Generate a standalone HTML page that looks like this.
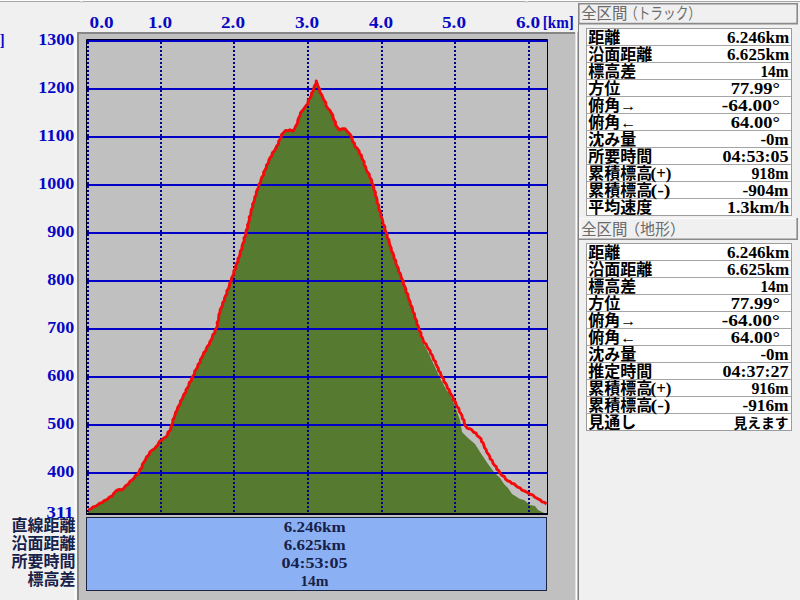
<!DOCTYPE html>
<html lang="ja">
<head>
<meta charset="utf-8">
<title>断面図 - 全区間</title>
<style>
html,body{margin:0;padding:0;}
body{width:800px;height:600px;overflow:hidden;background:#f0f0f0;position:relative;
font-family:"Liberation Serif",serif;font-size:16px;}
#stage{position:absolute;left:0;top:0;width:800px;height:600px;display:block;}
.h{position:absolute;display:block;height:16px;line-height:16px;overflow:hidden;white-space:nowrap;
color:transparent;font-weight:bold;font-size:12px;pointer-events:none;}
</style>
</head>
<body>
<svg id="stage" width="800" height="600" viewBox="0 0 800 600">
<rect width="800" height="600" fill="#f0f0f0"/>
<rect x="0" y="0" width="800" height="1" fill="#fcfcfc"/>
<path fill="none" stroke="#a6a6a6" d="M0 1.5H80.5L81.5 2.5L82.5 1.5H525.5L526.5 2.5L527.5 1.5H800"/>
<rect x="74" y="32" width="3" height="568" fill="#f8f8f8"/>
<rect x="77" y="32" width="500" height="568" fill="#c0c0c0"/>
<rect x="77" y="32" width="498" height="2" fill="#868686"/>
<rect x="77" y="32" width="2" height="568" fill="#868686"/>
<rect x="575" y="32" width="1" height="568" fill="#e2e2e2"/>
<rect x="576" y="32" width="1" height="568" fill="#fdfdfd"/>
<rect x="577" y="32" width="1" height="568" fill="#b8b8b8"/>
<polygon fill="#557a30" points="88,510 96,506 104,501 112,496 117,490 122,490 128,484 134,478 139,472 144,462 150,452 156,447 160,441 166,437 171,428 173,420 177,410 182,399 193,376 203,355 210,342 216.5,328 219.8,312 225.5,296 231,281 240,254 246,233 251,212 255,197 259,185 265,170 270,158 277,146 281,137 283,133 286,130.5 290,130 293,131 296,126 298,120 300,115 302,111 306,106 310,98 313,91 316.5,81 320,92 324,100 327.5,108 331.5,113 334,120 337,127 339.5,130 345,128.5 347.5,132 350,134 352,139 355,146 359,151 363,160 366,169 369,174 373,185 377,200 381,216 386,232 391,248 397,266 402,279 410,302 418,326 422,341 428,352 434,365 440,378 447,391 449,392 455,406 460,420 462,432 468,438 475,444 480,452 488,464 494,472 500,478 504,484 508,488 512,494 520,499 524,500 530,505 535,506 538,510 542,512 544,513 544,514 88,514"/>
<g fill="#0000c6">
<rect x="87" y="472" width="460" height="2"/>
<rect x="87" y="424" width="460" height="2"/>
<rect x="87" y="376" width="460" height="2"/>
<rect x="87" y="328" width="460" height="2"/>
<rect x="87" y="280" width="460" height="2"/>
<rect x="87" y="232" width="460" height="2"/>
<rect x="87" y="184" width="460" height="2"/>
<rect x="87" y="136" width="460" height="2"/>
<rect x="87" y="88" width="460" height="2"/>
<rect x="87" y="40" width="460" height="2"/>
</g>
<g stroke="#000084" stroke-width="2" stroke-dasharray="2 2" shape-rendering="crispEdges">
<line x1="88" y1="42" x2="88" y2="513"/>
<line x1="161" y1="42" x2="161" y2="513"/>
<line x1="234" y1="42" x2="234" y2="513"/>
<line x1="308" y1="42" x2="308" y2="513"/>
<line x1="382" y1="42" x2="382" y2="513"/>
<line x1="455" y1="42" x2="455" y2="513"/>
<line x1="529" y1="42" x2="529" y2="513"/>
</g>
<polyline fill="none" stroke="#f40a0a" stroke-width="2.9" stroke-linejoin="round" points="88.0,510.0 90.8,509.0 93.1,506.8 96.1,506.2 98.0,504.7 99.8,503.2 102.3,502.7 103.9,500.8 106.1,499.9 108.1,498.7 109.7,496.8 112.1,496.2 113.5,493.8 115.2,491.9 117.1,490.1 119.5,489.5 122.0,490.1 124.0,488.0 125.7,485.7 128.2,484.2 129.7,481.7 132.0,480.0 134.1,478.1 135.3,475.7 137.7,474.3 139.0,472.0 140.0,469.4 142.0,467.2 142.3,464.3 144.1,462.0 145.6,459.6 146.6,456.8 149.0,454.8 149.9,451.9 152.0,450.3 154.3,449.0 155.9,446.8 157.7,445.2 158.6,443.0 159.9,440.9 162.3,440.1 163.7,438.0 166.0,437.0 167.5,434.9 168.0,432.2 170.2,430.5 170.9,428.0 171.5,425.3 172.8,422.8 172.8,419.9 174.3,417.6 175.1,415.0 175.6,412.3 177.2,410.1 177.7,407.6 179.0,405.6 180.3,403.6 180.5,401.0 182.2,399.1 183.0,396.7 183.9,394.3 185.8,392.3 186.0,389.6 187.7,387.6 188.8,385.3 189.2,382.7 191.3,380.8 191.7,378.2 193.0,376.0 194.5,373.9 194.7,371.1 196.6,369.1 197.5,366.7 198.2,364.2 200.2,362.2 200.4,359.5 201.9,357.4 203.1,355.1 203.7,352.6 205.7,350.9 206.4,348.4 207.5,346.2 209.3,344.4 209.8,341.9 211.3,339.8 212.3,337.4 212.8,334.8 214.8,332.9 215.1,330.2 216.5,328.0 217.5,325.4 217.1,322.6 218.5,320.1 218.7,317.3 218.9,314.6 220.0,312.0 220.2,309.6 221.5,307.5 222.5,305.2 222.6,302.7 224.3,300.7 224.5,298.2 225.4,296.0 226.9,293.7 226.8,290.8 228.5,288.6 229.3,286.0 229.7,283.3 231.2,281.1 231.5,278.4 232.6,276.1 233.8,273.8 233.8,271.0 235.5,268.9 235.8,266.2 236.4,263.7 238.1,261.5 237.9,258.8 239.4,256.5 240.1,254.0 240.3,251.2 242.0,248.9 242.0,246.1 242.9,243.5 244.2,241.0 244.0,238.1 245.6,235.7 246.0,233.0 246.2,230.3 247.8,227.9 247.5,225.0 248.6,222.5 249.4,220.0 249.2,217.1 250.8,214.7 250.9,212.0 251.4,209.4 252.8,207.1 252.5,204.4 253.9,202.1 254.5,199.5 254.8,197.0 256.3,194.8 256.3,192.1 257.3,189.8 258.6,187.5 258.8,184.9 260.4,182.6 261.0,180.0 261.7,177.4 263.5,175.2 263.6,172.3 265.0,170.0 266.3,167.7 266.5,165.0 268.5,163.0 268.8,160.3 269.9,158.0 271.8,155.8 272.3,152.9 274.5,150.9 275.7,148.4 276.8,145.9 278.5,144.0 278.7,141.3 280.0,139.2 281.1,137.1 281.5,134.8 283.2,133.1 284.4,131.7 285.9,130.4 288.1,130.8 290.0,129.8 293.0,131.1 294.7,128.6 295.8,125.9 297.5,123.2 297.9,120.0 298.9,117.5 300.2,115.1 300.5,112.8 302.1,111.1 304.0,108.5 305.9,105.9 307.8,103.6 308.3,100.5 310.0,98.0 311.3,95.8 311.5,93.1 313.2,91.1 313.7,88.4 314.5,85.9 316.1,83.7 316.3,80.9 317.1,83.8 318.1,86.5 319.6,89.1 319.8,92.1 321.6,94.5 322.7,97.3 323.9,100.1 325.7,102.4 326.0,105.5 327.5,108.0 329.8,110.3 331.3,113.1 332.8,115.2 333.1,117.7 333.9,120.0 335.5,122.1 335.5,124.9 337.1,127.0 338.4,128.4 339.3,130.1 342.1,128.7 345.0,128.6 346.2,130.3 347.6,131.9 349.9,134.2 351.3,136.4 352.0,139.0 352.7,141.5 354.5,143.5 354.8,146.1 357.1,148.4 359.1,150.9 359.5,153.5 361.4,155.3 361.8,157.8 362.9,160.0 364.2,162.1 364.0,164.7 365.5,166.7 366.0,169.0 367.1,171.7 369.2,173.9 369.5,176.3 370.6,178.4 371.8,180.5 371.7,183.0 373.2,184.9 373.6,187.5 374.0,190.1 375.5,192.4 375.2,195.1 376.5,197.5 377.1,200.0 377.2,202.8 378.8,205.2 378.8,208.1 379.5,210.7 380.8,213.2 380.8,216.1 382.1,218.6 382.7,221.3 383.1,224.1 384.9,226.5 384.8,229.4 386.0,232.0 387.2,234.6 387.1,237.5 388.9,239.9 389.2,242.7 389.9,245.4 391.2,247.9 391.4,250.7 392.9,253.1 393.8,255.7 394.0,258.4 395.8,260.7 395.9,263.5 397.0,266.0 398.4,268.4 398.5,271.4 400.3,273.7 401.0,276.4 401.9,279.1 403.4,281.4 403.4,284.3 404.8,286.6 405.8,289.1 405.9,292.0 407.8,294.2 408.1,296.9 408.9,299.5 410.2,301.9 410.3,304.6 411.9,306.7 412.5,309.2 412.8,311.7 414.5,313.8 414.5,316.5 415.6,318.8 416.8,321.1 416.7,323.8 418.2,325.9 418.8,328.4 419.4,330.8 421.0,332.8 420.9,335.5 422.3,337.6 423.1,340.0 424.0,342.5 426.2,344.1 427.0,346.7 428.5,348.9 430.2,350.9 430.5,353.4 432.3,355.2 433.1,357.5 433.6,359.8 435.5,361.6 435.9,364.1 437.0,366.2 438.3,368.2 438.5,370.7 440.4,372.5 440.9,374.9 441.9,377.0 443.6,378.9 443.9,381.6 445.7,383.4 446.8,385.6 447.4,388.1 449.2,389.9 449.9,392.5 451.2,394.7 452.9,396.8 453.2,399.6 455.2,401.5 456.0,404.0 456.9,406.6 458.9,408.6 459.2,411.4 460.9,413.6 462.1,415.9 462.3,418.4 464.1,420.2 464.2,422.7 465.0,424.9 466.2,426.9 467.8,428.5 470.1,428.8 472.0,430.0 473.5,432.1 476.0,433.2 477.2,435.6 479.2,437.2 481.1,438.9 481.5,441.4 483.4,443.2 483.9,445.6 484.7,447.9 486.2,449.9 486.8,452.4 488.5,454.3 489.7,456.4 490.2,458.9 492.3,460.6 492.9,463.0 494.3,465.1 496.2,466.7 496.8,469.3 498.9,470.8 500.0,473.0 501.7,475.3 504.4,476.6 505.7,479.3 508.0,481.0 510.2,481.7 511.8,483.5 514.1,483.8 515.9,485.6 517.8,487.2 520.3,488.1 521.9,490.2 524.8,491.1 527.4,492.5 529.9,494.2 532.8,495.0 534.9,497.2 537.4,498.6 540.1,499.8 541.9,501.8 544.5,502.4 546.5,504.0"/>
<path fill="none" stroke="#00001c" d="M86.5 39.5H547.5V514H86.5Z"/>
<rect x="86" y="513" width="462" height="2" fill="#00001c"/>
<rect x="86.5" y="517.5" width="460" height="73" fill="#8cb0f4" stroke="#1c2440"/>
<path fill="none" stroke="#8a8a8a" stroke-width="1.6" d="M578.8 24V3.8H797.2V23.6H578"/>
<rect x="578" y="24" width="1" height="576" fill="#808080"/>
<path fill="none" stroke="#8a8a8a" stroke-width="1.6" d="M797.2 218V239.2H579"/>
<path fill="none" stroke="#fbfbfb" stroke-width="1" d="M580 238V218.5H796"/>
<rect x="586.5" y="28.5" width="205" height="187" fill="#fff" stroke="#9c9c9c"/>
<rect x="587" y="45" width="204" height="1" fill="#a4a4a4"/>
<rect x="587" y="62" width="204" height="1" fill="#a4a4a4"/>
<rect x="587" y="79" width="204" height="1" fill="#a4a4a4"/>
<rect x="587" y="96" width="204" height="1" fill="#a4a4a4"/>
<rect x="587" y="113" width="204" height="1" fill="#a4a4a4"/>
<rect x="587" y="130" width="204" height="1" fill="#a4a4a4"/>
<rect x="587" y="147" width="204" height="1" fill="#a4a4a4"/>
<rect x="587" y="164" width="204" height="1" fill="#a4a4a4"/>
<rect x="587" y="181" width="204" height="1" fill="#a4a4a4"/>
<rect x="587" y="198" width="204" height="1" fill="#a4a4a4"/>
<rect x="586.5" y="243.5" width="205" height="187" fill="#fff" stroke="#9c9c9c"/>
<rect x="587" y="260" width="204" height="1" fill="#a4a4a4"/>
<rect x="587" y="277" width="204" height="1" fill="#a4a4a4"/>
<rect x="587" y="294" width="204" height="1" fill="#a4a4a4"/>
<rect x="587" y="311" width="204" height="1" fill="#a4a4a4"/>
<rect x="587" y="328" width="204" height="1" fill="#a4a4a4"/>
<rect x="587" y="345" width="204" height="1" fill="#a4a4a4"/>
<rect x="587" y="362" width="204" height="1" fill="#a4a4a4"/>
<rect x="587" y="379" width="204" height="1" fill="#a4a4a4"/>
<rect x="587" y="396" width="204" height="1" fill="#a4a4a4"/>
<rect x="587" y="413" width="204" height="1" fill="#a4a4a4"/>
<g fill="#0808c4" font-family="&quot;Liberation Serif&quot;, &quot;Noto Sans CJK JP&quot;, serif" font-weight="bold" font-size="16">
<text x="47.2" y="476.7" textLength="27" lengthAdjust="spacingAndGlyphs">400</text>
<text x="47.2" y="428.7" textLength="27" lengthAdjust="spacingAndGlyphs">500</text>
<text x="47.2" y="380.7" textLength="27" lengthAdjust="spacingAndGlyphs">600</text>
<text x="47.2" y="332.7" textLength="27" lengthAdjust="spacingAndGlyphs">700</text>
<text x="47.2" y="284.7" textLength="27" lengthAdjust="spacingAndGlyphs">800</text>
<text x="47.2" y="236.7" textLength="27" lengthAdjust="spacingAndGlyphs">900</text>
<text x="38.2" y="188.7" textLength="36" lengthAdjust="spacingAndGlyphs">1000</text>
<text x="38.2" y="140.7" textLength="36" lengthAdjust="spacingAndGlyphs">1100</text>
<text x="38.2" y="92.7" textLength="36" lengthAdjust="spacingAndGlyphs">1200</text>
<text x="38.2" y="44.7" textLength="36" lengthAdjust="spacingAndGlyphs">1300</text>
<text x="46.6" y="518" textLength="27" lengthAdjust="spacingAndGlyphs">311</text>
<text x="-17.4" y="45.6" textLength="22" lengthAdjust="spacingAndGlyphs">[m]</text>
<text x="89.6" y="27.9" textLength="24" lengthAdjust="spacingAndGlyphs">0.0</text>
<text x="148" y="27.9" textLength="24" lengthAdjust="spacingAndGlyphs">1.0</text>
<text x="221" y="27.9" textLength="24" lengthAdjust="spacingAndGlyphs">2.0</text>
<text x="295" y="27.9" textLength="24" lengthAdjust="spacingAndGlyphs">3.0</text>
<text x="369" y="27.9" textLength="24" lengthAdjust="spacingAndGlyphs">4.0</text>
<text x="442" y="27.9" textLength="24" lengthAdjust="spacingAndGlyphs">5.0</text>
<text x="516" y="27.9" textLength="24" lengthAdjust="spacingAndGlyphs">6.0</text>
<text x="542.8" y="27.7" textLength="31" lengthAdjust="spacingAndGlyphs">[km]</text>
</g>
<g fill="#17224a" font-family="&quot;Liberation Serif&quot;, &quot;Noto Sans CJK JP&quot;, serif" font-weight="bold">
<text x="11.6" y="531.2" font-size="16">直線距離</text>
<text x="283.75" y="532.1" font-size="15" textLength="62" lengthAdjust="spacingAndGlyphs">6.246km</text>
<text x="11.6" y="549.1" font-size="16">沿面距離</text>
<text x="283.75" y="550" font-size="15" textLength="62" lengthAdjust="spacingAndGlyphs">6.625km</text>
<text x="11.6" y="567" font-size="16">所要時間</text>
<text x="281.4" y="567.9" font-size="15" textLength="66" lengthAdjust="spacingAndGlyphs">04:53:05</text>
<text x="27.6" y="584.9" font-size="16">標高差</text>
<text x="300.4" y="585.8" font-size="15" textLength="28" lengthAdjust="spacingAndGlyphs">14m</text>
</g>
<g fill="#000" font-family="&quot;Liberation Serif&quot;, &quot;Noto Sans CJK JP&quot;, serif" font-weight="bold" font-size="16">
<text x="588.3" y="43.4">距離</text>
<text x="727.1" y="43" textLength="62" lengthAdjust="spacingAndGlyphs">6.246km</text>
<text x="588.3" y="60.4">沿面距離</text>
<text x="727.1" y="60" textLength="62" lengthAdjust="spacingAndGlyphs">6.625km</text>
<text x="588.3" y="77.4">標高差</text>
<text x="760.4" y="77" textLength="28" lengthAdjust="spacingAndGlyphs">14m</text>
<text x="588.3" y="94.4">方位</text>
<text x="730.8" y="94" textLength="49" lengthAdjust="spacingAndGlyphs">77.99°</text>
<text x="588.3" y="111.4">俯角→</text>
<text x="721.8" y="111" textLength="58" lengthAdjust="spacingAndGlyphs">-64.00°</text>
<text x="588.3" y="128.4">俯角←</text>
<text x="730.8" y="128" textLength="49" lengthAdjust="spacingAndGlyphs">64.00°</text>
<text x="588.3" y="145.4">沈み量</text>
<text x="760.4" y="145" textLength="28" lengthAdjust="spacingAndGlyphs">-0m</text>
<text x="588.3" y="162.4">所要時間</text>
<text x="722.4" y="162" textLength="66" lengthAdjust="spacingAndGlyphs">04:53:05</text>
<text x="588.3" y="179.4">累積標高</text>
<text x="650.5" y="179" textLength="21" lengthAdjust="spacingAndGlyphs">(+)</text>
<text x="751.4" y="179" textLength="37" lengthAdjust="spacingAndGlyphs">918m</text>
<text x="588.3" y="196.4">累積標高</text>
<text x="650.5" y="196" textLength="20" lengthAdjust="spacingAndGlyphs">(-)</text>
<text x="742.4" y="196" textLength="46" lengthAdjust="spacingAndGlyphs">-904m</text>
<text x="588.3" y="213.4">平均速度</text>
<text x="727.1" y="213" textLength="62" lengthAdjust="spacingAndGlyphs">1.3km/h</text>
<text x="588.3" y="258.4">距離</text>
<text x="727.1" y="258" textLength="62" lengthAdjust="spacingAndGlyphs">6.246km</text>
<text x="588.3" y="275.4">沿面距離</text>
<text x="727.1" y="275" textLength="62" lengthAdjust="spacingAndGlyphs">6.625km</text>
<text x="588.3" y="292.4">標高差</text>
<text x="760.4" y="292" textLength="28" lengthAdjust="spacingAndGlyphs">14m</text>
<text x="588.3" y="309.4">方位</text>
<text x="730.8" y="309" textLength="49" lengthAdjust="spacingAndGlyphs">77.99°</text>
<text x="588.3" y="326.4">俯角→</text>
<text x="721.8" y="326" textLength="58" lengthAdjust="spacingAndGlyphs">-64.00°</text>
<text x="588.3" y="343.4">俯角←</text>
<text x="730.8" y="343" textLength="49" lengthAdjust="spacingAndGlyphs">64.00°</text>
<text x="588.3" y="360.4">沈み量</text>
<text x="760.4" y="360" textLength="28" lengthAdjust="spacingAndGlyphs">-0m</text>
<text x="588.3" y="377.4">推定時間</text>
<text x="722.4" y="377" textLength="66" lengthAdjust="spacingAndGlyphs">04:37:27</text>
<text x="588.3" y="394.4">累積標高</text>
<text x="650.5" y="394" textLength="21" lengthAdjust="spacingAndGlyphs">(+)</text>
<text x="751.4" y="394" textLength="37" lengthAdjust="spacingAndGlyphs">916m</text>
<text x="588.3" y="411.4">累積標高</text>
<text x="650.5" y="411" textLength="20" lengthAdjust="spacingAndGlyphs">(-)</text>
<text x="742.4" y="411" textLength="46" lengthAdjust="spacingAndGlyphs">-916m</text>
<text x="588.3" y="428.4">見通し</text>
<text x="733.4" y="427.8" font-size="13.6" textLength="55" lengthAdjust="spacingAndGlyphs">見えます</text>
</g>
<g fill="#6a6a6a" font-family="&quot;Liberation Sans&quot;, &quot;Noto Sans CJK JP&quot;, sans-serif" font-size="15.4">
<text x="581.2" y="19.4">全区間</text>
<text x="625" y="19.4" textLength="76" lengthAdjust="spacingAndGlyphs">（トラック）</text>
<text x="581.2" y="234.6">全区間</text>
<text x="625" y="234.6" textLength="60" lengthAdjust="spacingAndGlyphs">（地形）</text>
</g>
</svg>
<span class="h" style="left:47px;top:464px;width:27px">400</span>
<span class="h" style="left:47px;top:416px;width:27px">500</span>
<span class="h" style="left:47px;top:368px;width:27px">600</span>
<span class="h" style="left:47px;top:320px;width:27px">700</span>
<span class="h" style="left:47px;top:272px;width:27px">800</span>
<span class="h" style="left:47px;top:224px;width:27px">900</span>
<span class="h" style="left:38px;top:176px;width:36px">1000</span>
<span class="h" style="left:38px;top:128px;width:36px">1100</span>
<span class="h" style="left:38px;top:80px;width:36px">1200</span>
<span class="h" style="left:38px;top:32px;width:36px">1300</span>
<span class="h" style="left:47px;top:505px;width:27px">311</span>
<span class="h" style="left:-17px;top:33px;width:22px">[m]</span>
<span class="h" style="left:90px;top:15px;width:24px">0.0</span>
<span class="h" style="left:148px;top:15px;width:24px">1.0</span>
<span class="h" style="left:221px;top:15px;width:24px">2.0</span>
<span class="h" style="left:295px;top:15px;width:24px">3.0</span>
<span class="h" style="left:369px;top:15px;width:24px">4.0</span>
<span class="h" style="left:442px;top:15px;width:24px">5.0</span>
<span class="h" style="left:516px;top:15px;width:24px">6.0</span>
<span class="h" style="left:543px;top:15px;width:31px">[km]</span>
<span class="h" style="left:12px;top:518px;width:64px">直線距離</span>
<span class="h" style="left:284px;top:519px;width:62px">6.246km</span>
<span class="h" style="left:12px;top:536px;width:64px">沿面距離</span>
<span class="h" style="left:284px;top:537px;width:62px">6.625km</span>
<span class="h" style="left:12px;top:554px;width:64px">所要時間</span>
<span class="h" style="left:281px;top:555px;width:66px">04:53:05</span>
<span class="h" style="left:28px;top:572px;width:48px">標高差</span>
<span class="h" style="left:300px;top:573px;width:28px">14m</span>
<span class="h" style="left:588px;top:30px;width:32px">距離</span>
<span class="h" style="left:727px;top:30px;width:62px">6.246km</span>
<span class="h" style="left:588px;top:47px;width:64px">沿面距離</span>
<span class="h" style="left:727px;top:47px;width:62px">6.625km</span>
<span class="h" style="left:588px;top:64px;width:48px">標高差</span>
<span class="h" style="left:760px;top:64px;width:28px">14m</span>
<span class="h" style="left:588px;top:81px;width:32px">方位</span>
<span class="h" style="left:731px;top:81px;width:58px">77.99°</span>
<span class="h" style="left:588px;top:98px;width:48px">俯角→</span>
<span class="h" style="left:722px;top:98px;width:67px">-64.00°</span>
<span class="h" style="left:588px;top:115px;width:48px">俯角←</span>
<span class="h" style="left:731px;top:115px;width:58px">64.00°</span>
<span class="h" style="left:588px;top:132px;width:48px">沈み量</span>
<span class="h" style="left:760px;top:132px;width:28px">-0m</span>
<span class="h" style="left:588px;top:149px;width:64px">所要時間</span>
<span class="h" style="left:722px;top:149px;width:66px">04:53:05</span>
<span class="h" style="left:588px;top:166px;width:84px">累積標高(+)</span>
<span class="h" style="left:751px;top:166px;width:37px">918m</span>
<span class="h" style="left:588px;top:183px;width:84px">累積標高(-)</span>
<span class="h" style="left:742px;top:183px;width:46px">-904m</span>
<span class="h" style="left:588px;top:200px;width:64px">平均速度</span>
<span class="h" style="left:727px;top:200px;width:62px">1.3km/h</span>
<span class="h" style="left:588px;top:245px;width:32px">距離</span>
<span class="h" style="left:727px;top:245px;width:62px">6.246km</span>
<span class="h" style="left:588px;top:262px;width:64px">沿面距離</span>
<span class="h" style="left:727px;top:262px;width:62px">6.625km</span>
<span class="h" style="left:588px;top:279px;width:48px">標高差</span>
<span class="h" style="left:760px;top:279px;width:28px">14m</span>
<span class="h" style="left:588px;top:296px;width:32px">方位</span>
<span class="h" style="left:731px;top:296px;width:58px">77.99°</span>
<span class="h" style="left:588px;top:313px;width:48px">俯角→</span>
<span class="h" style="left:722px;top:313px;width:67px">-64.00°</span>
<span class="h" style="left:588px;top:330px;width:48px">俯角←</span>
<span class="h" style="left:731px;top:330px;width:58px">64.00°</span>
<span class="h" style="left:588px;top:347px;width:48px">沈み量</span>
<span class="h" style="left:760px;top:347px;width:28px">-0m</span>
<span class="h" style="left:588px;top:364px;width:64px">推定時間</span>
<span class="h" style="left:722px;top:364px;width:66px">04:37:27</span>
<span class="h" style="left:588px;top:381px;width:84px">累積標高(+)</span>
<span class="h" style="left:751px;top:381px;width:37px">916m</span>
<span class="h" style="left:588px;top:398px;width:84px">累積標高(-)</span>
<span class="h" style="left:742px;top:398px;width:46px">-916m</span>
<span class="h" style="left:588px;top:415px;width:48px">見通し</span>
<span class="h" style="left:733px;top:415px;width:55px">見えます</span>
<span class="h" style="left:582px;top:6px;width:112px">全区間（トラック）</span>
<span class="h" style="left:582px;top:222px;width:112px">全区間（地形）</span>
</body>
</html>
